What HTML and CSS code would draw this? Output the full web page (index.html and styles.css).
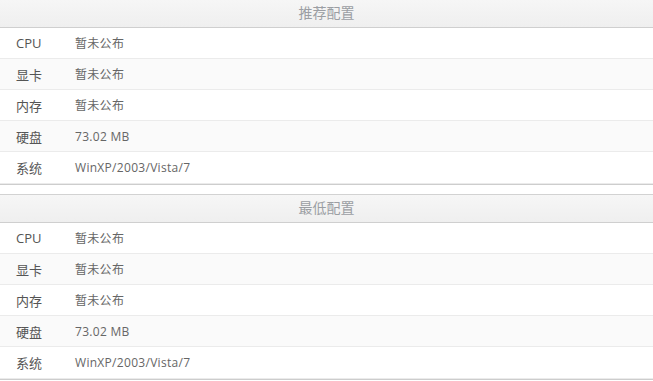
FILE: index.html
```html
<!DOCTYPE html>
<html>
<head>
<meta charset="utf-8">
<link rel="stylesheet" href="styles.css">
</head>
<body>
<div class="spec">
  <div class="spec-head">推荐配置</div>
  <div class="spec-row"><span class="k">CPU</span><span class="v">暂未公布</span></div>
  <div class="spec-row"><span class="k">显卡</span><span class="v">暂未公布</span></div>
  <div class="spec-row"><span class="k">内存</span><span class="v">暂未公布</span></div>
  <div class="spec-row"><span class="k">硬盘</span><span class="v">73.02 MB</span></div>
  <div class="spec-row"><span class="k">系统</span><span class="v">WinXP/2003/Vista/7</span></div>
</div>
<div class="spec">
  <div class="spec-head">最低配置</div>
  <div class="spec-row"><span class="k">CPU</span><span class="v">暂未公布</span></div>
  <div class="spec-row"><span class="k">显卡</span><span class="v">暂未公布</span></div>
  <div class="spec-row"><span class="k">内存</span><span class="v">暂未公布</span></div>
  <div class="spec-row"><span class="k">硬盘</span><span class="v">73.02 MB</span></div>
  <div class="spec-row"><span class="k">系统</span><span class="v">WinXP/2003/Vista/7</span></div>
</div>
</body>
</html>
```
FILE: styles.css
```css
html, body {
  margin: 0;
  padding: 0;
  background: #fff;
}
body {
  font-family: "Open Sans", "Noto Sans CJK SC", sans-serif;
  width: 653px;
}
.spec {
  border-bottom: 1px solid #cdcdcd;
}
.spec + .spec {
  margin-top: 9px;
}
.spec-head {
  height: 27px;
  line-height: 25px;
  text-align: center;
  font-size: 14px;
  color: #9b9ea3;
  background: linear-gradient(#f6f6f6, #efefef);
  border-top: 1px solid #d2d2d2;
  border-bottom: 1px solid #cfcfcf;
}
.spec:first-child .spec-head {
  border-top: none;
}
.spec-row {
  display: flex;
  align-items: center;
  height: 30px;
  border-bottom: 1px solid #ebebeb;
}
.spec-row:last-child {
  height: 31px;
}
.spec-row:nth-child(odd) {
  background: #fafafa;
}
.k {
  width: 59px;
  padding-left: 16px;
  font-size: 13px;
  color: #555;
}
.v {
  font-size: 12px;
  letter-spacing: 0.3px;
  color: #666;
}
```
